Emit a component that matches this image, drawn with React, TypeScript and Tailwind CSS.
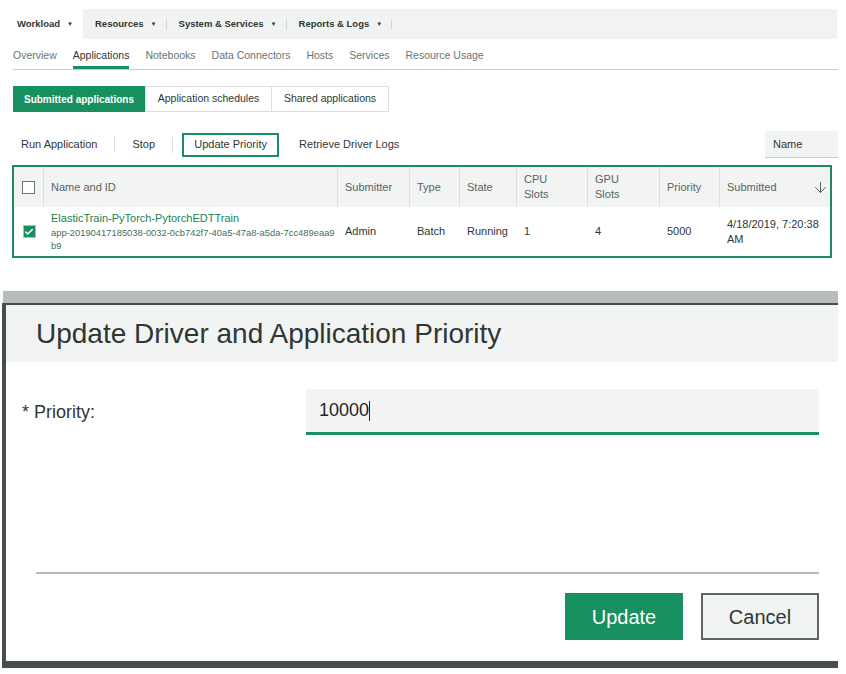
import { ArrowDown, Check } from "lucide-react";

const topMenu = [
  { label: "Workload", active: true },
  { label: "Resources" },
  { label: "System & Services" },
  { label: "Reports & Logs" },
];

const subTabs = ["Overview", "Applications", "Notebooks", "Data Connectors", "Hosts", "Services", "Resource Usage"];

// header column widths (px) for the table
const cols = [
  { key: "name", label: "Name and ID", w: "w-[294px]" },
  { key: "sub", label: "Submitter", w: "w-[72px]" },
  { key: "type", label: "Type", w: "w-[50px]" },
  { key: "state", label: "State", w: "w-[57px]" },
  { key: "cpu", label: "CPU\nSlots", w: "w-[71px]" },
  { key: "gpu", label: "GPU\nSlots", w: "w-[72px]" },
  { key: "prio", label: "Priority", w: "w-[60px]" },
];

export default function App() {
  return (
    <div className="w-[846px] h-[674px] bg-white overflow-hidden font-['Liberation_Sans',Arial,sans-serif] text-[#3d4543]">
      {/* --- top nav --- */}
      <div className="mt-[9px] ml-[5px] w-[832px] h-[30px] bg-[#f1f2f2] flex items-center">
        {topMenu.map((m, i) => (
          <div
            key={m.label}
            className={`h-full flex items-center text-[9.5px] font-bold text-[#2f3735] ${
              m.active ? "bg-white pl-[12px] pr-[10px] w-[78px]" : "pl-[12px]"
            }`}
          >
            <span>{m.label}</span>
            <span className="ml-[7px] text-[6px]">▼</span>
            {i > 0 && <span className="ml-[9px] w-px h-[11px] bg-[#d3d8d6]" />}
          </div>
        ))}
      </div>

      {/* --- sub tabs --- */}
      <div className="mt-[9px] ml-[13px] w-[825px] h-[22px] border-b border-[#c6cfcc] flex gap-[16px] text-[10.5px] text-[#6b7472]">
        {subTabs.map((t) => (
          <div
            key={t}
            className={`h-full ${t === "Applications" ? "border-b-[3px] border-[#178f5f] text-[#2f3735]" : ""}`}
          >
            {t}
          </div>
        ))}
      </div>

      {/* --- segmented buttons --- */}
      <div className="mt-[16px] ml-[13px] flex h-[26px] text-[10.5px]">
        <div className="w-[132px] bg-[#178f5f] text-white font-bold text-[10px] flex items-center justify-center">
          Submitted applications
        </div>
        <div className="w-[127px] border border-[#dcdfde] flex items-center justify-center text-[#2f3735]">
          Application schedules
        </div>
        <div className="w-[117px] border border-l-0 border-[#dcdfde] flex items-center justify-center text-[#2f3735]">
          Shared applications
        </div>
      </div>

      {/* --- action bar --- */}
      <div className="mt-[19px] ml-[21px] w-[817px] h-[27px] flex items-center text-[11px] text-[#2f3735]">
        <span>Run Application</span>
        <span className="ml-[17px] w-px h-[16px] bg-[#d8dcdb]" />
        <span className="ml-[17px]">Stop</span>
        <span className="ml-[17px] w-px h-[16px] bg-[#d8dcdb]" />
        <span className="ml-[9px] w-[97px] h-[24px] border-2 border-[#178f5f] flex items-center justify-center">
          Update Priority
        </span>
        <span className="ml-[20px]">Retrieve Driver Logs</span>
        <div className="ml-auto w-[73px] h-[27px] bg-[#f2f3f3] border-b border-[#c6cfcc] pl-[8px] flex items-center">
          Name
        </div>
      </div>

      {/* --- table --- */}
      <div className="mt-[7px] ml-[12px] w-[820px] border-2 border-[#1f8a5c] text-[11px]">
        <div className="flex h-[40px] bg-[#f2f3f3] text-[#5a6361]">
          <div className="w-[30px] flex items-center justify-center border-r border-[#dcdfde]">
            <div className="w-[13px] h-[13px] border border-[#6b7472] bg-white" />
          </div>
          {cols.map((c) => (
            <div
              key={c.key}
              className={`${c.w} px-[7px] flex items-center whitespace-pre-line leading-[15px] border-r border-[#dcdfde]`}
            >
              {c.label}
            </div>
          ))}
          <div className="flex-1 pl-[7px] pr-[1px] flex items-center justify-between">
            <span>Submitted</span>
            <ArrowDown size={17} strokeWidth={1.3} className="text-[#4d5654]" />
          </div>
        </div>
        <div className="flex h-[49px] bg-white text-[#2f3735]">
          <div className="w-[30px] flex items-center justify-center">
            <div className="w-[13px] h-[13px] bg-[#178f5f] border border-[#9fc9b5] flex items-center justify-center">
              <Check size={10} strokeWidth={3.5} className="text-white" />
            </div>
          </div>
          <div className="w-[294px] pl-[7px] pr-[1px] flex flex-col justify-center">
            <div className="text-[#1a7f52] leading-[13px]">ElasticTrain-PyTorch-PytorchEDTTrain</div>
            <div className="mt-[1px] text-[9.4px] leading-[13px] text-[#3f6f5c] break-all">
              app-20190417185038-0032-0cb742f7-40a5-47a8-a5da-7cc489eaa9b9
            </div>
          </div>
          <div className="w-[72px] px-[7px] flex items-center">Admin</div>
          <div className="w-[50px] px-[7px] flex items-center">Batch</div>
          <div className="w-[57px] px-[7px] flex items-center">Running</div>
          <div className="w-[71px] px-[7px] flex items-center">1</div>
          <div className="w-[72px] px-[7px] flex items-center">4</div>
          <div className="w-[60px] px-[7px] flex items-center">5000</div>
          <div className="flex-1 px-[7px] flex items-center leading-[15px]">4/18/2019, 7:20:38 AM</div>
        </div>
      </div>

      {/* --- dialog --- */}
      <div className="mt-[33px] w-[838px]">
        <div className="ml-[3px] h-[12px] bg-[#b6bdbb]" />
        <div className="ml-[2px] border-l-4 border-t-2 border-b-[7px] border-[#474f4d] h-[365px] flex flex-col">
          <div className="h-[57px] bg-[#f2f3f3] pl-[30px] flex items-center text-[28px] text-[#2f3735]">
            Update Driver and Application Priority
          </div>
          <div className="mt-[27px] flex items-center">
            <div className="w-[300px] pl-[16px] text-[18px] text-[#2f3735]">* Priority:</div>
            <div className="w-[513px] h-[46px] bg-[#f2f3f3] border-b-[3px] border-[#178f5f] pl-[13px] flex items-center text-[18px] text-[#1f2625]">
              10000
              <span className="w-px h-[20px] bg-[#1f2625]" />
            </div>
          </div>
          <div className="mt-auto mr-[19px] ml-[30px] border-t-2 border-[#b3bab8]" />
          <div className="mt-[19px] mb-[21px] pr-[19px] flex justify-end gap-[18px]">
            <button className="w-[118px] h-[47px] bg-[#178f5f] text-white text-[20px]">Update</button>
            <button className="w-[118px] h-[47px] bg-[#f2f3f3] border-2 border-[#5d6866] text-[#2f3735] text-[20px]">
              Cancel
            </button>
          </div>
        </div>
      </div>
    </div>
  );
}
